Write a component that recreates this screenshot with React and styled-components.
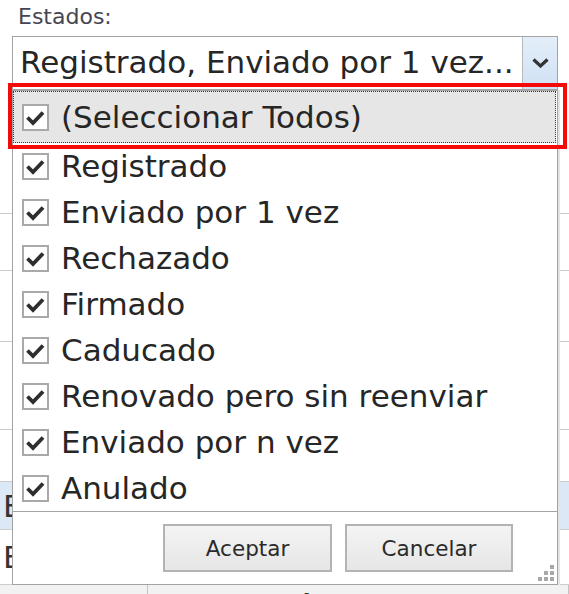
import React from 'react';
import styled, { createGlobalStyle } from 'styled-components';

const GlobalStyle = createGlobalStyle`
  html, body {
    margin: 0;
    padding: 0;
    background: #fff;
    overflow: hidden;
  }
  * {
    box-sizing: border-box;
  }
`;

const Page = styled.div`
  position: relative;
  width: 569px;
  height: 594px;
  overflow: hidden;
  font-family: "DejaVu Sans", "Liberation Sans", sans-serif;
  color: #262626;
`;

const Label = styled.div`
  height: 36px;
  padding: 3px 0 0 18px;
  font-size: 22px;
  line-height: 28px;
  color: #464652;
`;

const Combo = styled.div`
  display: flex;
  margin-left: 12px;
  width: 546px;
  height: 54px;
  border: 1px solid #a3a3a3;
  background: #fff;
`;

const ComboText = styled.div`
  flex: 1;
  padding-left: 7px;
  font-size: 31px;
  line-height: 50px;
  white-space: nowrap;
  overflow: hidden;
`;

const ComboButton = styled.div`
  width: 35px;
  display: flex;
  align-items: center;
  justify-content: center;
  border-left: 1px solid #b8b8b8;
  background: linear-gradient(#e4eefa, #cfe1f5);
`;

/* table that lies behind the open dropdown */
const BackTable = styled.div`
  display: flex;
  flex-direction: column;
`;

const BackRow = styled.div`
  height: ${p => p.h}px;
  border-bottom: 1px solid #cdcdcd;
  background: ${p => (p.selected ? '#dce8f6' : '#fff')};
  display: flex;
  align-items: center;
  padding-left: 3px;
  font-size: 31px;
  color: #333;
`;

const HeaderRow = styled.div`
  display: flex;
  height: 20px;
  background: #f2f2f2;
`;

const HeaderCell = styled.div`
  width: ${p => p.w}px;
  border-right: 1px solid #c4c4c4;
  padding-left: ${p => p.pad || 0}px;
  padding-top: 2px;
  font-size: 31px;
  line-height: 34px;
  color: #333;
  overflow: hidden;
`;

const Popup = styled.div`
  position: absolute;
  left: 12px;
  top: 90px;
  width: 546px;
  height: 495px;
  border: 1px solid #a3a3a3;
  background: #fff;
  box-shadow: 2px 0 0 #e4e4e4;
  display: flex;
  flex-direction: column;
`;

const List = styled.div`
  display: flex;
  flex-direction: column;
  height: 420px;
`;

const Item = styled.div`
  display: flex;
  align-items: center;
  gap: 12px;
  height: ${p => (p.focused ? 52 : 46)}px;
  padding-left: ${p => (p.focused ? 8 : 9)}px;
  margin: ${p => (p.focused ? '0 1px 0 0' : '0')};
  background: ${p => (p.focused ? '#e6e6e6' : 'transparent')};
  border: ${p => (p.focused ? '1px dotted #3a3a3a' : 'none')};
  font-size: 31px;
  white-space: nowrap;
`;

const Box = styled.span`
  display: flex;
  align-items: center;
  justify-content: center;
  width: 27px;
  height: 27px;
  border: 2px solid #a9a9a9;
  background: #fff;
  flex-shrink: 0;
`;

const Footer = styled.div`
  position: relative;
  flex: 1;
  border-top: 1px solid #a3a3a3;
  display: flex;
  align-items: center;
  justify-content: flex-end;
  gap: 13px;
  padding-right: 44px;
`;

const Button = styled.button`
  width: ${p => p.w}px;
  height: 48px;
  border: 2px solid #b3b3b3;
  background: linear-gradient(#f4f4f4, #e6e6e6);
  font-family: "DejaVu Sans", "Liberation Sans", sans-serif;
  font-size: 21.5px;
  color: #2a2a2a;
  padding: 0;
`;

const Grip = styled.svg`
  position: absolute;
  right: 2px;
  bottom: 2px;
`;

const Highlight = styled.div`
  position: absolute;
  left: 8px;
  top: 83px;
  width: 559px;
  height: 66px;
  border: 4px solid #f50a0a;
  pointer-events: none;
`;

const Check = () => (
  <svg width="23" height="23" viewBox="0 0 23 23">
    <path d="M3.5 11.5 L9 17 L19 6.5" fill="none" stroke="#2e2e2e" strokeWidth="3.8" />
  </svg>
);

const Chevron = () => (
  <svg width="17" height="10" viewBox="0 0 17 10">
    <path d="M1.5 1.5 L8.5 8 L15.5 1.5" fill="none" stroke="#333" strokeWidth="3.2" />
  </svg>
);

const options = [
  'Registrado',
  'Enviado por 1 vez',
  'Rechazado',
  'Firmado',
  'Caducado',
  'Renovado pero sin reenviar',
  'Enviado por n vez',
  'Anulado',
];

const backRows = [
  { h: 124 },
  { h: 57 },
  { h: 71 },
  { h: 88 },
  { h: 52 },
  { h: 48, selected: true, text: 'E' },
  { h: 55, text: 'E' },
];

export default function App() {
  return (
    <Page>
      <GlobalStyle />
      <Label>Estados:</Label>
      <Combo>
        <ComboText>Registrado, Enviado por 1 vez...</ComboText>
        <ComboButton>
          <Chevron />
        </ComboButton>
      </Combo>

      <BackTable>
        {backRows.map((r, i) => (
          <BackRow key={i} h={r.h} selected={r.selected}>{r.text}</BackRow>
        ))}
        <HeaderRow>
          <HeaderCell w={148} />
          <HeaderCell w={421} pad={148}>A</HeaderCell>
        </HeaderRow>
      </BackTable>

      <Popup>
        <List>
          <Item focused>
            <Box><Check /></Box>
            (Seleccionar Todos)
          </Item>
          {options.map(o => (
            <Item key={o}>
              <Box><Check /></Box>
              {o}
            </Item>
          ))}
        </List>
        <Footer>
          <Button w={169}>Aceptar</Button>
          <Button w={168}>Cancelar</Button>
          <Grip width="18" height="18" viewBox="0 0 18 18">
            <g fill="#a8a8a8">
              <rect x="13" y="1" width="4" height="4" />
              <rect x="7" y="7" width="4" height="4" />
              <rect x="13" y="7" width="4" height="4" />
              <rect x="1" y="13" width="4" height="4" />
              <rect x="7" y="13" width="4" height="4" />
              <rect x="13" y="13" width="4" height="4" />
            </g>
          </Grip>
        </Footer>
      </Popup>

      <Highlight />
    </Page>
  );
}
